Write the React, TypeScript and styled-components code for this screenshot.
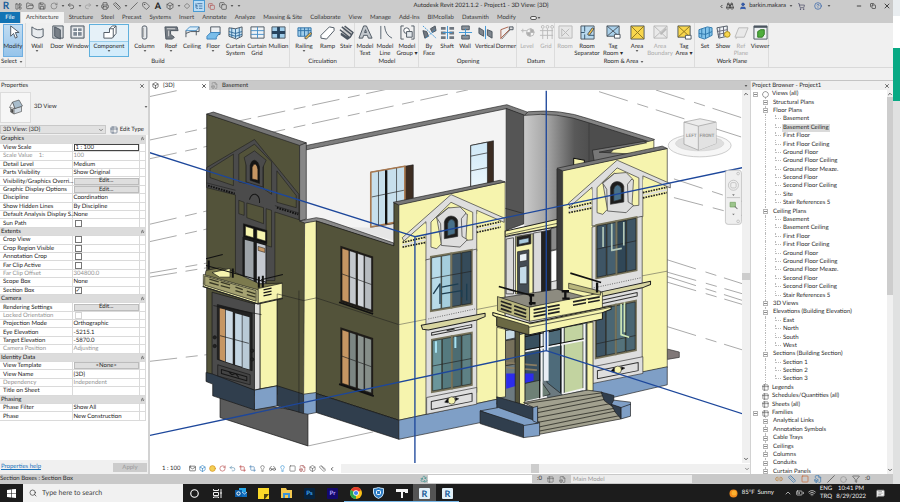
import React from "react";
import styled, { createGlobalStyle, css } from "styled-components";
import {
  X, ChevronDown, ChevronUp, ChevronLeft, ChevronsUp, Save, FolderOpen, Undo2, Redo2, Printer, Ruler, Slash,
  Tag, Box, Diamond, ListTree, LayoutPanelLeft, Copy, Search, ShoppingCart, CircleHelp, User, Binoculars,
  Minus, RotateCw, Filter, MessageSquareText, BatteryMedium, Wifi, Mail, Circle, Lightbulb, Glasses,
  Crop, Square, Link2, Recycle, FileBox, Table2,
} from "lucide-react";

const Global = createGlobalStyle`
  *, *::before, *::after { box-sizing: border-box; }
  body { margin: 0; background: #e4e5e5; text-rendering: geometricPrecision; }
  body, button, input, select { font-family: Lato, "Liberation Sans", sans-serif; font-size: 6px; color: #2b2b2b; text-rendering: geometricPrecision; }
  button, select { border: 0; padding: 0; margin: 0; background: none; }
  a { color: #1b74bd; }
  svg { display: block; flex: none; }
`;

/* ---------- frame ---------- */
const Screen = styled.div`height: 100vh; display: flex; flex-direction: column; line-height: 8px; overflow: hidden;`;
const Desk = styled.div`flex: 1; min-height: 0; display: flex;`;
const Revit = styled.div`flex: 1; min-width: 0; display: flex; flex-direction: column; background: #f0f0f0;`;
const Edge = styled.div`
  width: 7px; display: grid; grid-template-rows: 16px 32px 53px 1fr;
  & > :nth-child(1) { background: #e9edf0; }
  & > :nth-child(2) { background: #fff; }
  & > :nth-child(3) { background: #08a984; }
  & > :nth-child(4) { background: #e0e1e1; }
`;

/* ---------- title bar ---------- */
const TitleBar = styled.header`height: 12px; display: grid; grid-template-columns: auto 1fr auto; align-items: center; background: #cbcbcb;`;
const ToolStrip = styled.div`display: flex; align-items: center; height: 12px;`;
const Tool = styled.button<{ $on?: boolean }>`
  width: 12px; height: 12px; display: flex; align-items: center; justify-content: center; color: #444; flex: none;
  ${(p) => p.$on && css`background: #b9dcf5; box-shadow: inset 0 0 0 1px #4a9bd4; color: #174f86;`}
`;
const Logo = styled.b`color: #1c5f9c; font-size: 10px; line-height: 12px;`;
const Letter = styled.b`color: #222; font-size: 9px; line-height: 12px;`;
const Caret = styled.span<{ $w?: number }>`
  width: ${(p) => p.$w ?? 5}px; display: inline-flex; justify-content: center; flex: none;
  &::before { content: ""; border: 2px solid transparent; border-top-color: #333; border-bottom: 0; transform: scale(0.7); }
`;
const Title = styled.h1`margin: 0; font-size: 6px; font-weight: 400; line-height: 10px; text-align: center; white-space: nowrap;`;
const Account = styled(ToolStrip)`justify-content: flex-end; gap: 2px; white-space: nowrap; padding-right: 0;`;
const Gap = styled.span<{ $w: number }>`width: ${(p) => p.$w}px; flex: none;`;

/* ---------- ribbon ---------- */
const Tabs = styled.nav`height: 11px; display: flex; align-items: stretch; background: #cbcbcb;`;
const Tab = styled.button<{ $kind?: "file" | "active" }>`
  padding: 0 4px; line-height: 11px; white-space: nowrap; color: #3a3a3a;
  ${(p) => p.$kind === "file" && css`background: #1273b4; color: #fff; width: 20px; margin-right: 1px;`}
  ${(p) => p.$kind === "active" && css`background: #f2f2f2; padding: 0 5px; margin-right: 1px;`}
`;
const TabWidget = styled.span`display: flex; align-items: center; margin-left: 10px; &::before { content: ""; width: 7px; height: 4px; border: 1px solid #555; border-radius: 2px; background: #eee; }`;
const RibbonBar = styled.div`height: 45px; display: flex; background: #f0f0f0; border-bottom: 1px solid #d9d9d9;`;
const Group = styled.section<{ $pad?: boolean }>`
  display: flex; flex-direction: column; box-shadow: inset -1px 0 #dcdcdc;
  ${(p) => p.$pad && css`padding: 0 3px;`}
`;
const GroupRow = styled.div`display: flex; flex: 1; padding-top: 1px;`;
const GroupName = styled.div`display: flex; align-items: center; justify-content: center; line-height: 10px; height: 10px; white-space: nowrap; margin: 0 -3px;`;
const RibbonButton = styled.button<{ $w: number; $state?: "on" | "hot" | "off" }>`
  width: ${(p) => p.$w}px; height: 33px; display: flex; flex-direction: column; align-items: center; padding-top: 1px; line-height: 7px; white-space: nowrap;
  & > span.label { padding-top: 3px; }
  ${(p) => p.$state === "on" && css`background: linear-gradient(#c3ddf2, #94c3ea); box-shadow: inset 0 0 0 1px #6faee0;`}
  ${(p) => p.$state === "hot" && css`background: linear-gradient(#e6f1f8 17px, #5fb0dd 17px, #d3ecfb 18px); box-shadow: inset 0 0 0 1px #5fb0dd;`}
  ${(p) => p.$state === "off" && css`color: #aaa; svg { opacity: 0.35; filter: grayscale(1); }`}
`;
const OptionsBar = styled.div`height: 12px; background: #f1f1f1;`;

const ink = "#4c5560";
const I: Record<string, React.ReactNode> = {
  modify: <path d="M5 1v11l3-3 2 5 2-1-2-5h4z" fill="#fff" />,
  wall: <path d="M2 2q6 5 12 2v8q-5 4-12-1z" fill="#e8ebee" />,
  door: <><path d="M3 1h11v13H3z" fill="#d4d8dc" /><path d="M5 2l6 3v10l-6-3z" fill="#777e86" /></>,
  window: <><path d="M1 1h14v13H1z" fill="#c7ccd2" /><path d="M3 3h10v9H3zM8 3v9M3 7h10" fill="#7d8894" stroke="#fff" /></>,
  component: <path d="M2 8h6V4l3-3h4v8l-4 5H2zM8 4h4v9M12 4l3-3" fill="#fff" />,
  column: <><rect x="5.500" y="1" width="5" height="14" rx="2" fill="#e6e9ec" /><path d="M7 3v10" stroke="#aaa" /></>,
  roof: <><path d="M1 2l13 0 1 4H7v4l4 3-2 2H2z" fill="#747b83" /><path d="M3 4h9M5 6v6" stroke="#ddd" /></>,
  ceiling: <><path d="M1 6l4-4h10l-3 4z" fill="#dbeefa" stroke="#4a90c8" /><path d="M1 6v7M12 6v5M15 2v5M1 9l5-2h9" /></>,
  floor: <><path d="M5 2h10v8H5z" fill="#eceff2" /><path d="M1 12l4-4h10l-4 5v2H1z" fill="#79bdea" stroke="#3b83bd" /></>,
  csystem: <><path d="M1 3l7 1 7-2v10l-6 3-8-3z" fill="#c8e4f5" /><path d="M4 3v10M8 4v10M12 3v10M1 7l7 2 7-2M1 10l7 2 7-2" stroke="#356d9c" /></>,
  cgrid: <><path d="M1 2h14v12H1z" fill="#eef3f6" /><path d="M8 2v12M1 6h14M1 10h14" stroke="#4a90c8" /></>,
  mullion: <><path d="M1 2h14v12H1z" fill="#9fcdea" /><path d="M8 2v12M1 8h14" stroke="#26425c" strokeWidth="3" /></>,
  railing: <><path d="M1 3h14v9H1z" fill="#9fcdea" stroke="#2f72a8" /><path d="M4 3v9M8 3v9M12 3v9M1 6h14" stroke="#2f72a8" /><path d="M8 14l6-6 2 1-6 6z" fill="#f1c14d" /></>,
  ramp: <path d="M1 11l9-9 5 1v3l-8 9-6-1z" fill="#fff" />,
  stair: <path d="M3 2l10 8M1 5l10 8M6 1l9 7-3 5-3 2-7-5M2 9l8 5" strokeWidth="1.500" fill="#ccc" />,
  mtext: <path d="M1 14L6 1h3l6 13h-4l-1-3H6l-1 3zM7 8l1-3 1 3z" fill="#c3c8cd" />,
  mline: <path d="M3 1v14M7 1q1 10 8 13" stroke="#56636f" />,
  mgroup: <><path d="M4 1H1v14h3M12 1h3v14h-3" /><circle cx="7" cy="6" r="3" fill="#fff" /><path d="M7 7h6v6H7z" fill="#e3e8ec" /></>,
  byface: <><path d="M1 6l4 1 2 5-4 2zM9 4l5-3 1 5-4 2z" fill="#6f7780" /><path d="M1 1l14 13M4 14L14 5" stroke="#3d94d4" strokeDasharray="2 1" /></>,
  shaft: <><path d="M1 2h5v3H1zM1 7h5v3H1zM1 12h5v3H1zM10 2h5v3h-5zM10 7h5v3h-5zM10 12h5v3h-5z" fill="#6f7780" stroke="none" /><path d="M8 1v14M3 8h10" stroke="#3d94d4" /></>,
  owall: <><path d="M4 1h8v4H4zM4 11h8v4H4z" fill="#8b929a" /><path d="M1 8h14M8 4v8" stroke="#3d94d4" /></>,
  vertical: <><path d="M1 3l5 3v6L1 9zM10 5l5 2v7l-5-3z" fill="#7f878f" /><path d="M8 1v14" stroke="#3d94d4" /></>,
  dormer: <><path d="M2 14L14 2M2 5v10M2 5l8-3" stroke="#a9604a" /><path d="M11 2h4v3h-4z" fill="#ddd" /><path d="M12 5L3 15" stroke="#777" /></>,
  level: <><path d="M1 6h7M3 4v4" /><circle cx="11" cy="8" r="4" fill="#fff" /><path d="M11 4a4 4 0 0 1 4 4h-8a4 4 0 0 0 4 4z" fill="#333" /></>,
  grid: <><path d="M4 4v11M9 4v11M14 4v11M1 6h14M1 11h14" /><circle cx="4" cy="2" r="1.500" /><circle cx="9" cy="2" r="1.500" /><circle cx="14" cy="2" r="1.500" /></>,
  room: <path d="M1 1h14v13H1zM4 4l8 8M12 4l-8 8M4 4v8" fill="#d6dadd" />,
  roomsep: <><path d="M1 1h14v14H1z" fill="#b8d9ee" /><path d="M5 1v6M5 10v5M1 8h4M9 11h6" stroke="#33546e" /><path d="M8 10l5-7 2 1-5 7z" fill="#f1c14d" /></>,
  tagroom: <><path d="M1 1h13v11H1z" fill="#a9d0ea" /><path d="M1 1l13 11M14 1L1 12" /><path d="M9 10h6v4H9z" fill="#fff" /></>,
  area: <><path d="M1 1h14v14H1z" fill="#f8d64c" /><path d="M1 1l14 14M15 1L1 15" stroke="#8d7420" /></>,
  areab: <><path d="M1 1h14v13H1zM1 1l14 13M15 1L1 14" fill="#ddd" /><path d="M8 10l6-6" strokeWidth="2" /></>,
  tagarea: <><path d="M1 1h13v12H1z" fill="#f8d64c" /><path d="M1 1l13 12M14 1L1 13" stroke="#8d7420" /><path d="M9 11h6v4H9z" fill="#fff" /></>,
  set: <><path d="M1 5l9-3 5 1v8l-8 4-6-2z" fill="#82c3ea" stroke="#2f77ad" /><path d="M4 4v9M8 3v11M12 3v9M1 9l7 1 7-3" stroke="#2f77ad" /></>,
  show: <><path d="M1 3l11-2v11l-9 2z" fill="#eef3f6" /><path d="M4 3v10M8 2v10M1 7l11-2M2 10l10-2" stroke="#667" /><circle cx="12" cy="10" r="3" fill="#f8d64c" stroke="#a98c20" /></>,
  ref: <path d="M5 3h10l-4 10H1zM3 13l-1 2" fill="#ddd" />,
  viewer: <><path d="M1 1h14v14H1z" fill="#eef1f3" /><path d="M1 2h14" strokeWidth="2" /><path d="M5 7l3-2h4v5l-2 3H5z" fill="#4fae3d" stroke="#2f7a22" /></>,
};
const RIcon = ({ n }: { n: string }) => (
  <svg width="15" height="15" viewBox="0 0 16 16" fill="none" stroke={ink} strokeWidth="1" strokeLinejoin="round">{I[n]}</svg>
);
type RB = [string, string, number, ("on" | "hot" | "off" | "")?, boolean?];
const groups: { name: string; caret?: boolean; items: RB[] }[] = [
  { name: "Select", caret: true, items: [["modify", "Modify", 20, "on"]] },
  { name: "Build", items: [["wall", "Wall", 22, "", true], ["door", "Door", 18], ["window", "Window", 23], ["component", "Component", 40, "hot", true], ["column", "Column", 31, "", true], ["roof", "Roof", 22, "", true], ["ceiling", "Ceiling", 20], ["floor", "Floor", 22, "", true], ["csystem", "Curtain\nSystem", 23], ["cgrid", "Curtain\nGrid", 20], ["mullion", "Mullion", 23]] },
  { name: "Circulation", items: [["railing", "Railing", 28, "", true], ["ramp", "Ramp", 19], ["stair", "Stair", 18]] },
  { name: "Model", items: [["mtext", "Model\nText", 20], ["mline", "Model\nLine", 20], ["mgroup", "Model\nGroup ▾", 24]] },
  { name: "Opening", items: [["byface", "By\nFace", 20], ["shaft", "Shaft", 16], ["owall", "Wall", 20], ["vertical", "Vertical", 20], ["dormer", "Dormer", 22]] },
  { name: "Datum", items: [["level", "Level", 20, "off"], ["grid", "Grid", 18, "off"]] },
  { name: "Room & Area", caret: true, items: [["room", "Room", 20, "off"], ["roomsep", "Room\nSeparator", 24], ["tagroom", "Tag\nRoom ▾", 28], ["area", "Area", 20, "", true], ["areab", "Area\nBoundary", 26, "off"], ["tagarea", "Tag\nArea ▾", 22]] },
  { name: "Work Plane", items: [["set", "Set", 20], ["show", "Show", 16], ["ref", "Ref\nPlane", 20, "off"], ["viewer", "Viewer", 18]] },
];
const Ribbon = () => (
  <RibbonBar>
    {groups.map((g, i) => (
      <Group key={g.name} $pad={i === 0}>
        <GroupRow>
          {g.items.map(([icon, label, w, state, caret]) => (
            <RibbonButton key={icon} $w={w} $state={state || undefined}>
              <RIcon n={icon} />
              <span className="label">{label.split("\n").map((l) => <div key={l}>{l}</div>)}</span>
              {caret && <Caret />}
            </RibbonButton>
          ))}
        </GroupRow>
        <GroupName>{g.name}{g.caret && <Caret $w={8} />}</GroupName>
      </Group>
    ))}
  </RibbonBar>
);

/* ---------- properties ---------- */
const Work = styled.main`flex: 1; min-height: 0; display: grid; grid-template-columns: 148px 1fr 142px; gap: 1px; background: #d2d2d2; border-top: 1px solid #c4c4c4;`;
const Panel = styled.aside`display: flex; flex-direction: column; min-height: 0; overflow: hidden; background: #fff;`;
const PanelHead = styled.div`height: 9px; flex: none; display: flex; align-items: center; justify-content: space-between; background: #f0f0f0; padding: 0 0 0 1px; h2 { margin: 0; font-size: 6px; font-weight: 400; }`;
const TypeBox = styled.div`height: 34px; flex: none; display: flex; align-items: center; gap: 3px; background: #f0f0f0; padding: 1px 0; & > span:last-child { margin-left: auto; }`;
const Thumb = styled.span`width: 31px; height: 31px; border: 1px solid #dcdcdc; background: #f6f6f6; display: grid; place-items: center;`;
const TypeRow = styled.div`height: 11px; flex: none; display: flex; align-items: center; gap: 4px; background: #f0f0f0;`;
const Select = styled.select`appearance: none; width: 100%; height: 9px; line-height: 8px; color: #333; background: #e1e1e1; border: 1px solid #c8c8c8; padding: 0 2px;`;
const SelectWrap = styled.label`flex: 1; display: flex; align-items: center; position: relative; svg { position: absolute; right: 2px; }`;
const EditType = styled.button`display: flex; align-items: center; gap: 2px; padding-right: 4px; white-space: nowrap;`;
const Sheet = styled.div`flex: 1; min-height: 0;`;
const Props = styled.table`
  width: calc(100% - 2px); height: 88%; border-collapse: collapse; table-layout: fixed; line-height: 7px;
  td, th { padding: 0; font-weight: 400; text-align: left; white-space: nowrap; border-bottom: 1px solid #dadada; border-right: 1px solid #dadada; height: 8px; }
  tbody th { padding-left: 3px; }
  td { padding-left: 1px; }
  td:last-child { padding: 0; }
`;
const Section = styled.tr`background: #dcdcdc; th[colspan] { padding-left: 1px; border-right: 0; color: #222; } svg { margin: auto; }`;
const Dim = styled.tr<{ $dim?: boolean }>`color: ${(p) => (p.$dim ? "#929292" : "#222")};`;
const EditBtn = styled.button`display: block; width: 100%; height: 7px; line-height: 6px; background: #dedede; box-shadow: inset 0 0 0 1px #bcbcbc;`;
const Field = styled.input`display: block; width: 100%; height: 7px; border: 1px solid #444; padding: 0 1px; line-height: 5px;`;
const Check = styled.input`
  appearance: none; display: block; margin: 0 1px; width: 7px; height: 7px; border: 1px solid #777; background: #fff;
  &:checked::after { content: "✓"; display: block; font-size: 6px; line-height: 5px; }
  &:disabled { border-color: #d5d5d5; }
`;
const PropsFoot = styled.div`height: 14px; flex: none; display: flex; align-items: center; justify-content: space-between; background: #f0f0f0; padding: 0 1px;`;
const Apply = styled.button`width: 34px; height: 9px; background: #ccc; color: #999; line-height: 9px;`;

const rows: string[][] = [
  ["#", "Graphics"], ["View Scale", "1 : 100", "field"], ["Scale Value\u00a0\u00a0\u00a0 1:", "100", "dim"], ["Detail Level", "Medium"], ["Parts Visibility", "Show Original"],
  ["Visibility/Graphics Overri...", "Edit...", "btn"], ["Graphic Display Options", "Edit...", "btn"], ["Discipline", "Coordination"], ["Show Hidden Lines", "By Discipline"],
  ["Default Analysis Display S...", "None"], ["Sun Path", "", "check"],
  ["#", "Extents"], ["Crop View", "", "check"], ["Crop Region Visible", "", "check"], ["Annotation Crop", "", "check"], ["Far Clip Active", "", "check"],
  ["Far Clip Offset", "304800.0", "dim"], ["Scope Box", "None"], ["Section Box", "on", "check"],
  ["#", "Camera"], ["Rendering Settings", "Edit...", "btn"], ["Locked Orientation", "", "check-dim"], ["Projection Mode", "Orthographic"], ["Eye Elevation", "-5215.1"],
  ["Target Elevation", "-5870.0"], ["Camera Position", "Adjusting", "dim"],
  ["#", "Identity Data"], ["View Template", "<None>", "btn"], ["View Name", "{3D}"], ["Dependency", "Independent", "dim"], ["Title on Sheet", ""],
  ["#", "Phasing"], ["Phase Filter", "Show All"], ["Phase", "New Construction"],
];
const cell = (label: string, value: string, kind?: string) => {
  if (kind === "btn") return <EditBtn aria-label={label}>{value}</EditBtn>;
  if (kind === "field") return <Field aria-label={label} defaultValue={value} />;
  if (kind?.startsWith("check")) return <Check type="checkbox" aria-label={label} defaultChecked={value === "on"} disabled={kind === "check-dim"} />;
  return value;
};
const House = () => (
  <svg width="16" height="16" viewBox="0 0 16 16" stroke="#444" strokeWidth="0.600" strokeLinejoin="round">
    <path d="M2.500 8v5l3.500 2V9z" fill="#fff" /><path d="M6 9.500l7.500-2v5L6 15z" fill="#cfd9e2" /><path d="M1.500 8.500L4.500 3l2.500 6.500z" fill="#f4f6f8" /><path d="M4.500 3l6.500-2 3.500 6-7.500 2.500z" fill="#a9bdcc" /><path d="M3.500 10l1.300.6v3.200l-1.300-.7z" fill="#222" />
  </svg>
);
const Properties = () => (
  <Panel>
    <PanelHead><h2>Properties</h2><Tool aria-label="Close properties"><X size={6} strokeWidth={3} /></Tool></PanelHead>
    <TypeBox><Thumb><House /></Thumb><span>3D View</span><Caret /></TypeBox>
    <TypeRow>
      <SelectWrap><Select aria-label="View selector"><option>{"3D View: {3D}"}</option></Select><ChevronDown size={6} /></SelectWrap>
      <EditType><Table2 size={8} color="#5a6a80" />Edit Type</EditType>
    </TypeRow>
    <Sheet>
      <Props>
        <colgroup><col width="72" /><col /><col width="6" /></colgroup>
        <tbody>
          {rows.map(([a, b, k]) => a === "#" ? (
            <Section key={b}><th colSpan={2}>{b}</th><td><ChevronsUp size={5} strokeWidth={3} /></td></Section>
          ) : (
            <Dim key={a} $dim={!!k?.includes("dim")}><th>{a}</th><td>{cell(a, b, k)}</td><td /></Dim>
          ))}
        </tbody>
      </Props>
    </Sheet>
    <PropsFoot><a href="#help">Properties help</a><Apply disabled>Apply</Apply></PropsFoot>
  </Panel>
);

/* ---------- project browser ---------- */
const Browser = styled.div`flex: 1; min-height: 0; display: flex; overflow: hidden;`;
const Tree = styled.ul`flex: 1; margin: 0 0 -2px; padding: 0; list-style: none; display: flex; flex-direction: column;`;
const Node = styled.li<{ $d: number; $sel?: boolean }>`
  flex: 1; min-height: 0; display: flex; align-items: center; gap: 2px; white-space: nowrap; line-height: 8px;
  padding-left: ${(p) => [2, 12, 23][p.$d]}px; position: relative;
  ${(p) => p.$d > 0 && css`&::before { content: ""; position: absolute; left: 14px; top: 0; bottom: 0; border-left: 1px dotted #bbb; }`}
  ${(p) => p.$d > 1 && css`&::after { content: ""; position: absolute; left: 24px; top: 0; width: 6px; height: 50%; border: dotted #bbb; border-width: 0 0 1px 1px; }`}
  & > span { ${(p) => p.$d > 1 && css`margin-left: 8px;`} ${(p) => p.$sel && css`background: #dadada;`} padding: 0 1px; }
`;
const Toggle = styled.button`
  width: 5px; height: 5px; background: #fff; border: 1px solid #b5b5b5; position: relative; z-index: 1; margin-right: 2px; flex: none; display: grid; place-items: center;
  &::before { content: ""; width: 3px; height: 1px; background: #888; }
`;
const VScroll = styled.div<{ $w: number }>`width: ${(p) => p.$w}px; flex: none; display: flex; flex-direction: column; align-items: center; background: #f0f0f0; padding: 1px 0;`;
const Knob = styled.span<{ $size: number }>`width: 100%; flex: ${(p) => p.$size} 0 0; background: #cdcdcd;`;
const Spring = styled.span<{ $n: number }>`flex: ${(p) => p.$n} 0 0;`;
const plans = ["Basement", "Basement Ceiling", "First Floor", "First Floor Ceiling", "Ground Floor", "Ground Floor Ceiling", "Ground Floor Meaze.", "Second Floor", "Second Floor Ceiling"];
const tree: [number, string, string?][] = [
  [0, "Views (all)", "views"], [1, "Structural Plans"], [1, "Floor Plans"],
  ...[...plans, "Site", "Stair References 5"].map((p) => [2, p] as [number, string]),
  [1, "Ceiling Plans"], ...[...plans, "Stair References 5"].map((p) => [2, p] as [number, string]),
  [1, "3D Views"], [1, "Elevations (Building Elevation)"], [2, "East"], [2, "North"], [2, "South"], [2, "West"],
  [1, "Sections (Building Section)"], [2, "Section 1"], [2, "Section 2"], [2, "Section 3"],
  [0, "Legends", "leaf"], [0, "Schedules/Quantities (all)", "leaf"], [0, "Sheets (all)", "leaf"], [0, "Families", "fam"],
  ...["Analytical Links", "Annotation Symbols", "Cable Trays", "Ceilings", "Columns", "Conduits", "Curtain Panels"].map((p) => [1, p] as [number, string]),
];
const LeafGap = styled.i`width: 7px; flex: none;`;
const ProjectBrowser = () => (
  <Panel>
    <PanelHead><h2>Project Browser - Project1</h2><Tool aria-label="Close browser"><X size={6} strokeWidth={3} /></Tool></PanelHead>
    <Browser>
      <Tree>
        {tree.map(([d, t, k], i) => (
          <Node key={i} $d={d} $sel={i === 4}>
            {k === "leaf" ? <LeafGap /> : d < 2 && <Toggle aria-label={t} />}
            {d === 0 && (k === "views" ? <Circle size={7} color="#555" strokeDasharray="6 2" /> : <Table2 size={7} color="#555" />)}
            <span>{t}</span>
          </Node>
        ))}
      </Tree>
      <VScroll $w={6}><ChevronUp size={6} strokeWidth={3} /><Knob $size={197} /><Spring $n={172} /><ChevronDown size={6} strokeWidth={3} /></VScroll>
    </Browser>
  </Panel>
);

/* ---------- 3D model drawing ---------- */
const quad = (x: number, y: number, w: number, h: number, s: number) =>
  `${x},${y} ${x + w},${y + w * s} ${x + w},${y + h + w * s} ${x},${y + h}`;
const OLIVE = "#53533a", YEL = "#f6f4ae", LIT = "#7f9fc6", SHADE = "#303e4d", STONE = "#dedede", DARK = "#4b4b4b";

type WinProps = { x: number; y: number; w: number; h: number; s: number; panes: string[]; frame?: string; bar?: number };
const Win = ({ x, y, w, h, s, panes, frame = "#1f1c18", bar = 0.5 }: WinProps) => {
  const pw = (w - 8) / panes.length;
  return (
    <g>
      <polygon points={quad(x, y, w, h, s)} fill={frame} />
      {panes.map((c, i) => {
        const px = x + 4 + i * pw;
        return <polygon key={i} points={quad(px + 1, y + 6 + (px - x) * s, pw - 2, h - 12, s)} fill={c} stroke="#111" strokeWidth="1.500" />;
      })}
      <line x1={x + w / 2} y1={y + (w / 2) * s} x2={x + w / 2} y2={y + h + (w / 2) * s} stroke={frame} strokeWidth="6" />
      <line x1={x + 4} y1={y + h * bar} x2={x + w - 4} y2={y + h * bar + w * s} stroke="#222" strokeWidth="2" />
    </g>
  );
};

const Gable = () => (
  <g stroke="#333" strokeWidth="2">
    <path d="M67 472L213 343L372 413V426L290 390V512L138 540V424L72 482Z" fill={STONE} />
    <path d="M92 470L138 430V462ZM290 400L352 424L290 436Z" fill={YEL} stroke="none" />
    <path d="M153 425L213 366L278 396V478L258 480V470L262 402L205 382L170 410L184 490L170 505L153 500Z" fill={YEL} />
    <path d="M170 412L205 383L240 380L258 398L244 415L246 468L262 478L240 500L184 495L182 430Z" fill={STONE} />
    <path d="M193 475V425Q197 408 213 407Q230 408 233 422V468Z" fill="#1d1d1d" />
    <path d="M203 466V430Q206 418 214 417Q223 418 225 428V460Z" fill="#47708a" />
    <path d="M68 486L138 470M68 500L138 486M290 440L362 424M290 456L362 440" stroke="#222" strokeWidth="5" strokeDasharray="5 3" />
    <path d="M68 494L138 478M290 448L362 432" stroke={STONE} strokeWidth="5" />
  </g>
);
const Panel3 = ({ x, y }: { x: number; y: number }) => (
  <g stroke="#333" strokeWidth="2">
    <polygon points={quad(x, y, 150, 50, -0.2)} fill={STONE} />
    <polygon points={quad(x + 14, y + 12, 122, 24, -0.2)} fill={STONE} strokeWidth="3" />
    <circle cx={x + 75} cy={y + 9} r="11" fill={YEL} strokeWidth="2" />
    <path d={`M${x + 54} ${y + 14}l10 -12v14zM${x + 96} ${y + 4}l-10 -4v10z`} />
  </g>
);

const Model = () => (
  <svg width="100%" height="100%" viewBox="450 270 1776 1116" preserveAspectRatio="xMidYMid slice" strokeLinejoin="round">
    <g stroke="#555" strokeWidth="1.500" fill="none">
      <path strokeDasharray="84 26 36 20" d="M450 290L560 266M450 420L1160 268M450 476L1420 266M450 672L622 632M450 724L622 686M450 818L622 788M450 830L622 802M450 1082L622 1062" />
      <path strokeDasharray="90 30 34 24" d="M1796 275L2226 412M1966 270L2226 354M2020 536L2226 604M2020 592L2226 646M2000 778L2226 850M2000 815L2226 880M2000 828L2226 900M2000 845L2226 912M2000 978L2226 1048" />
      <path d="M925 1335L1120 1293" />
    </g>
    {/* rear walls seen from inside */}
    <polygon points="920,442 1518,325 1518,700 1180,740 920,660" fill="#f3f3f3" />
    <polygon points="920,436 1520,314 1584,337 1572,347 1518,326 920,449" fill="#7d7d7d" stroke="#222" strokeWidth="2" />
    <polygon points="1518,325 1572,345 1572,670 1518,690" fill="#555" stroke="#222" strokeWidth="2" />
    <defs>
      <linearGradient id="curve"><stop offset="0" stopColor="#c9c9c9" /><stop offset="0.350" stopColor="#a5a5a5" /><stop offset="0.780" stopColor="#595959" /><stop offset="1" stopColor="#4f4f4f" /></linearGradient>
      <linearGradient id="sky" x2="0" y2="1"><stop offset="0" stopColor="#cfe8f7" /><stop offset="1" stopColor="#eaf6fc" /></linearGradient>
    </defs>
    <path d="M1572 345Q1680 325 1765 362V680H1572Z" fill="url(#curve)" />
    <polygon points="1765,362 1958,422 1958,480 1765,510" fill="#4d4d4d" stroke="#222" strokeWidth="2" />
    <path d="M1572 346L1584 335Q1680 326 1765 356L1962 418L1950 426L1765 368Q1670 334 1572 346Z" fill="#848484" stroke="#222" strokeWidth="2" />
    <polygon points="1840,448 1960,420 1960,470 1790,500" fill={YEL} stroke="#333" strokeWidth="2" />
    <polygon points="1776,450 1930,424 1938,428 1796,456 1900,462 1890,478 1784,500" fill="#777" stroke="#222" strokeWidth="2" />
    <polygon points="1720,474 1752,480 1752,500 1720,500" fill={YEL} stroke="#111" strokeWidth="3" />
    <path d="M1515 624L1572 640" stroke="#222" strokeWidth="2" />

    <g stroke="#222" strokeWidth="2">
      <polygon points="1412,436 1480,422 1480,545 1412,560" fill="#3b2c22" />
      <polygon points="1412,436 1462,426 1462,550 1412,560" fill="url(#sky)" />
      <path d="M1412 468L1462 458M1412 512L1462 502" />
      <polygon points="1113,516 1240,494 1240,665 1113,690" fill="#3d2d22" />
      <polygon points="1113,516 1215,498 1215,660 1113,680" fill="#c7dfec" stroke="#a97950" strokeWidth="5" />
      <path d="M1159 510V672" stroke="#111" strokeWidth="7" />
      <path d="M1136 514V676M1190 504V665M1116 590L1212 570" />
    </g>
    <polygon points="1113,682 1200,668 1180,720 1040,680" fill="#e6e6e6" />

    {/* base below the tower */}
    <polygon points="662,1190 925,1235 925,1335 662,1250" fill="#5b5b5b" stroke="#111" strokeWidth="2" />

    {/* left tower */}
    <polygon points="622,342 900,430 900,660 915,665 915,1200 833,1180 780,1190 640,1130 622,1115" fill={OLIVE} stroke="#111" strokeWidth="2" />
    <polygon points="900,432 920,428 920,656 900,662" fill="#868686" stroke="#222" strokeWidth="2" />
    <polygon points="622,342 642,336 920,428 900,436" fill="#757575" stroke="#222" strokeWidth="2" />
    <g transform="translate(450 240)" stroke="#161616" strokeWidth="1.500" fill={DARK}>
      <path d="M172 262L315 178L448 342V418L376 395V600H258V344L172 322Z" />
      <path d="M182 266L252 222V316L182 292Z" fill={OLIVE} />
      <path d="M382 272L440 346V382L382 366Z" fill={OLIVE} />
      <path d="M268 222L315 192L366 245V342L342 325V250L315 215L290 235V310L268 305Z" fill={OLIVE} />
      <path d="M284 232L315 212L350 240L340 262V320L290 305V255Z" />
      <path d="M302 300V255Q306 240 315 240Q326 242 330 260V310Z" fill="#151515" />
      <path d="M308 296V262Q312 250 318 252Q324 256 325 268V300Z" fill="#c69663" />
      <path d="M300 358Q305 340 318 342Q332 348 330 368" strokeWidth="3" />
      <path d="M176 316L256 340M382 382L446 402" strokeWidth="6" stroke="#111" strokeDasharray="5 3" />
      <path d="M172 308L258 330M376 376L448 398" />
      <path d="M292 368L342 382V430L292 412ZM350 385L366 390V500L350 495ZM268 360L284 366V405L268 400Z" fill={OLIVE} />
      <path d="M282 430L352 450V490L282 470Z" fill="#111" />
      <path d="M288 438L312 445V472L288 465ZM322 448L348 455V482L322 474Z" fill={YEL} />
      <path d="M280 470L350 490V620H280Z" fill="#1a1a1a" />
      <path d="M286 478L312 485V610H286Z" fill="#9ea4a9" stroke="none" />
      <path d="M322 488L348 495V610H322Z" fill="#c5c9d0" stroke="none" />
      <path d="M326 498L346 504V516L326 510Z" fill="#c69663" />
    </g>

    {/* tower bay */}
    <g transform="translate(600 780)" stroke="#161616" strokeWidth="2">
      <polygon points="38,95 165,130 165,388 38,345" fill={DARK} />
      <polygon points="165,130 182,126 182,384 165,388" fill={STONE} />
      <polygon points="182,126 233,115 233,375 182,384" fill={YEL} />
      <polygon points="54,132 158,158 158,330 54,296" fill="#222" />
      <g stroke="none">
        <polygon points="61,143 77,147 77,302 61,296" fill="#c69663" />
        <polygon points="79,148 100,154 100,310 79,303" fill="#cbd9e4" />
        <polygon points="107,158 127,163 127,318 107,312" fill="#c3d5e2" />
        <polygon points="129,164 150,170 150,326 129,320" fill="#b9cad6" />
      </g>
      <path d="M62 225L148 248M42 135L186 162" />
      <polygon points="55,312 152,342 152,372 55,346" fill="#444" />
      <path d="M66 326L142 348V360L66 338ZM88 334l10 8 10 -4 10 12" fill="none" strokeWidth="3" />
      <circle cx="46" cy="230" r="5" fill="#222" /><circle cx="46" cy="256" r="5" fill="#222" /><circle cx="158" cy="270" r="5" fill="#222" /><circle cx="158" cy="296" r="5" fill="#222" />
      <polygon points="20,335 40,340 165,388 165,447 40,405 40,370 20,362" fill={SHADE} />
      <polygon points="165,388 233,375 233,435 165,447" fill={LIT} />
      <polygon points="233,375 312,400 312,458 233,435" fill={SHADE} />
      {/* balcony */}
      <polygon points="20,30 60,22 95,30 180,70 248,68 180,98 12,70" fill="#7c7a4e" />
      <polygon points="38,36 92,24 92,50 60,50" fill={YEL} />
      <polygon points="12,42 176,88 176,130 12,78" fill={YEL} />
      <polygon points="16,46 170,90 170,122 16,74" fill="#a5a271" />
      <path d="M30 56l28 8M30 66l28 8M64 65l28 8M64 75l28 8M108 80l22 7M108 90l22 7M142 92l26 8M142 102l26 8" stroke="#3a3a26" strokeWidth="4" />
      <polygon points="176,84 248,68 248,112 176,128" fill={YEL} />
      <path d="M192 88l24 -5M192 97l24 -5M192 106l24 -5" strokeWidth="4" />
      <path d="M10 78L176 130L250 114" fill="none" stroke="#222" strokeWidth="3" />
      <path d="M20 15L200 65M20 -5L70 -18M185 58L250 42" stroke="#111" strokeWidth="3" fill="none" />
      <path d="M178 48v34M190 46v34M28 0v26M100 24v28" stroke="#111" strokeWidth="6" />
    </g>

    {/* side wall */}
    <polygon points="915,668 950,658 950,1178 912,1182" fill={YEL} stroke="#333" strokeWidth="2" />
    <polygon points="900,662 950,652 972,656 1182,728 1182,738 950,662 915,668" fill="#8a8a8a" stroke="#222" strokeWidth="2" />
    <polygon points="950,662 1182,736 1182,608 1197,612 1197,1258 950,1178" fill={OLIVE} stroke="#111" strokeWidth="2" />
    <path d="M833 880L912 900L950 892L1197 972M833 880V1160M898 870V1235" stroke="#1c1c1c" strokeWidth="1.500" fill="none" />
    <polygon points="912,1180 950,1175 950,1235 925,1240 912,1238" fill={LIT} stroke="#222" strokeWidth="2" />
    <polygon points="950,1178 1197,1258 1197,1315 950,1235" fill={SHADE} stroke="#111" strokeWidth="2" />
    <Win x={1022} y={736} w={98} h={168} s={0.33} panes={["#c69663", "#c4c8cd", "#d2d5da", "#b7bbc0"]} />
    <Win x={1022} y={980} w={98} h={172} s={0.33} panes={["#c69663", "#7c8683", "#8b938f", "#868e89"]} />
    <path d="M1018 905L1120 940M1018 1150L1122 1186" stroke="#111" strokeWidth="5" />

    {/* left front */}
    <polygon points="1197,612 1515,545 1515,1190 1197,1258" fill={YEL} stroke="#333" strokeWidth="2" />
    <polygon points="1180,606 1500,540 1515,545 1197,614" fill="#777" stroke="#222" strokeWidth="2" />
    <polygon points="1197,1258 1515,1190 1515,1250 1197,1315" fill={LIT} stroke="#222" strokeWidth="2" />
    <path d="M1197 972L1490 915" stroke="#444" strokeWidth="1.500" />
    <g transform="translate(1140 240)"><Gable /></g>
    <polygon points="1278,778 1430,746 1430,1175 1278,1240" fill={STONE} stroke="#333" strokeWidth="2" />
    <Win x={1290} y={767} w={128} h={168} s={-0.17} frame="#77735a" panes={["#b8dbe9", "#a5cddd", "#3e5565", "#354b5a"]} bar={0.4} />
    <path d="M1300 880l20 -30v60M1325 860l50 -10M1325 880l60 -10v20M1400 850v50" stroke="#1d3d50" strokeWidth="4" fill="none" />
    <path d="M1285 955L1425 925" stroke="#333" strokeWidth="2" strokeDasharray="3 4" />
    <polygon points="1264,974 1455,938 1455,948 1430,958 1285,988 1268,986" fill="#d8d5a0" stroke="#222" strokeWidth="3" />
    <path d="M1295 996L1415 972V980L1295 1004ZM1340 990l24 -5" fill="none" stroke="#333" strokeWidth="3" />
    <Win x={1293} y={1015} w={125} h={162} s={-0.18} frame="#77735a" panes={["#6b969b", "#557a7f", "#4c6c72", "#5e8184"]} />
    <path d="M1308 1022v34M1366 1008v34" stroke="#a8e2f2" strokeWidth="6" />
    <Panel3 x={1280} y={1190} />

    {/* recessed centre */}
    <g transform="translate(1140 240)" stroke="#222" strokeWidth="2">
      <polygon points="375,470 548,435 548,720 375,760" fill={STONE} />
      <polygon points="375,452 545,414 545,436 375,468" fill={YEL} strokeWidth="3" />
      <path d="M378 462L545 426" />
      <polygon points="378,476 400,472 400,640 378,640" fill="#d9d9d9" />
      <polygon points="406,468 458,460 458,640 406,640" fill={YEL} />
      <polygon points="410,470 452,462 452,490 410,498" fill="#222" />
      <polygon points="416,478 446,472 446,486 416,492" fill="#a8c9dc" />
      <polygon points="412,514 446,508 446,640 412,640" fill="#444c54" />
      <polygon points="418,522 440,518 440,540 418,544" fill="#e9f1f6" />
      <polygon points="418,560 440,556 440,610 418,610" fill="#c5dbe8" />
      <polygon points="460,458 484,454 484,640 460,640" fill="#d9d9d9" />
      <polygon points="484,454 512,448 512,640 484,640" fill="#222" />
      <polygon points="512,512 530,508 530,600 512,604" fill="#fff" />
      <polygon points="512,445 530,440 530,506 512,510" fill="#8a8a8a" />
      <polygon points="530,266 548,270 548,700 530,700" fill="#3b3b3b" />
    </g>

    {/* right front */}
    <polygon points="2000,1045 2036,1054 2036,1070 2000,1076" fill="#807878" stroke="#333" strokeWidth="2" />
    <polygon points="1687,510 2000,445 2000,1100 1687,1162" fill={YEL} stroke="#333" strokeWidth="2" />
    <polygon points="1670,504 1985,438 2000,445 1687,512" fill="#777" stroke="#222" strokeWidth="2" />
    <polygon points="1687,1162 2000,1098 2000,1152 1687,1225" fill={LIT} stroke="#222" strokeWidth="2" />
    <path d="M1925 826L2000 812" stroke="#444" strokeWidth="1.500" />
    <g transform="translate(1637 137)"><Gable /></g>
    <polygon points="1775,680 1925,648 1925,1085 1775,1140" fill={STONE} stroke="#333" strokeWidth="2" />
    <Win x={1785} y={672} w={126} h={165} s={-0.2} frame="#77735a" panes={["#3e5565", "#46606f", "#304757", "#3e5565"]} bar={0.45} />
    <path d="M1808 680v60M1834 670v80l30 -6M1870 665v70" stroke="#b2c7b8" strokeWidth="5" fill="none" />
    <path d="M1780 862L1920 832" stroke="#333" strokeWidth="2" strokeDasharray="3 4" />
    <polygon points="1775,880 1950,842 1950,852 1925,862 1775,894" fill="#d8d5a0" stroke="#222" strokeWidth="3" />
    <path d="M1800 900L1910 876V886L1800 910Z" fill="none" stroke="#333" strokeWidth="3" />
    <Win x={1783} y={922} w={126} h={154} s={-0.2} frame="#77735a" panes={["#3e5565", "#4a6673", "#54727b", "#4a6673"]} bar={0.7} />
    <path d="M1862 910v92l24 8M1872 905v90" stroke="#cfe8b8" strokeWidth="5" fill="none" />
    <Panel3 x={1777} y={1098} />

    {/* entrance porch, balcony and steps */}
    <g transform="translate(1200 780)" stroke="#1c1c1c" strokeWidth="2">
      <polygon points="315,195 560,170 560,400 480,420 290,430" fill="#6c7a80" />
      <polygon points="316,240 345,235 345,310 316,315" fill="#77715c" />
      <polygon points="316,210 345,205 345,232 316,238" fill="#c7dbe6" />
      <polygon points="374,222 420,212 420,415 374,425" fill="#39505f" />
      <polygon points="318,338 400,338 400,360 318,384" fill="#2c2cec" stroke="none" />
      <path d="M318 306L410 314M318 320L410 328" stroke="#8a7d62" strokeWidth="5" />
      <polygon points="374,368 420,358 450,400 374,425" fill="#6e8076" />
      <polygon points="492,200 548,190 548,385 492,400" fill="#c2d3a0" />
      <polygon points="440,215 484,205 484,400 440,365" fill="#4e6b7a" />
      <path d="M374 272L550 238M424 210V414M487 200V400M552 190V390M374 424L440 408M487 400L552 384" stroke="#f4f4f4" strokeWidth="6" fill="none" />
      <path d="M374 268L550 234M418 212V412M481 202V396M374 228L480 206" fill="none" stroke="#111" strokeWidth="3" />
      <path d="M438 210V360" stroke="#e9eef5" strokeWidth="14" />
      <polygon points="290,200 316,206 316,408 290,412" fill={YEL} />
      <polygon points="345,205 358,208 358,430 345,425" fill={OLIVE} />
      <polygon points="358,222 374,218 374,430 358,432" fill={YEL} />
      <polygon points="560,188 578,184 578,390 560,394" fill={YEL} />
      {/* balcony */}
      <polygon points="300,112 385,140 560,110 470,86" fill="#8d8b80" />
      <polygon points="292,108 388,140 388,182 292,150" fill="#b9b67d" />
      <path d="M302 122l32 11M302 133l32 11M302 144l32 11M342 136l36 12M342 147l36 12M342 158l36 12" stroke="#222" strokeWidth="5" />
      <polygon points="388,140 606,96 606,142 388,182" fill={YEL} />
      <path d="M400 148l78 -15M400 158l78 -15M400 168l78 -15M518 124l80 -15M518 134l80 -15" stroke="#222" strokeWidth="5" />
      <path d="M440 140v26M560 116v26" stroke={YEL} strokeWidth="6" />
      <path d="M505 68L600 92V104L505 84Z" fill="#b9b67d" />
      <polygon points="278,156 388,188 632,136 632,146 606,156 606,175 388,222 290,196 290,170 278,164" fill={YEL} strokeWidth="3" />
      <polygon points="290,168 386,196 386,222 290,196" fill="#6b6944" />
      <path d="M386 200L606 156M388 190L632 140" />
      <path d="M296 78L392 104M510 38L602 66" stroke="#111" strokeWidth="5" />
      <path d="M386 104l16 0M392 108v26M386 128h20M484 92h22M495 92v24M486 114h22M590 66v30" stroke="#111" strokeWidth="7" />
      {/* steps */}
      <polygon points="370,425 560,388 605,394 662,460 662,474 418,520 400,440" fill="#a2a18f" />
      <path d="M376 428L605 396M396 446L610 404M410 456L622 414M412 470L632 428M414 484L642 442M416 498L650 450M418 510L660 464" strokeWidth="3" stroke="#43433a" />
      <polygon points="290,408 400,440 412,444 412,486 390,486 290,450" fill={SHADE} />
      <polygon points="240,450 295,440 418,484 370,500" fill={LIT} />
      <polygon points="240,450 370,492 370,530 240,488" fill={SHADE} />
      <polygon points="370,494 418,486 418,524 370,530" fill={LIT} />
      <polygon points="398,440 412,436 412,486 398,480" fill={LIT} />
      <polygon points="602,394 640,404 640,440 612,420" fill={SHADE} />
      <polygon points="640,418 690,424 690,432 662,442 632,432" fill={LIT} />
      <polygon points="632,430 662,440 662,474 645,455" fill={SHADE} />
      <polygon points="662,440 690,430 690,466 662,474" fill={LIT} />
    </g>

    {/* section box */}
    <g stroke="#1d479b" strokeWidth="4" fill="none">
      <path d="M450 457L1245 709L2226 502M1245 709V1386M450 1304L1638 1050L2226 1239M1638 272V1050" />
    </g>

    {/* view cube */}
    <g transform="translate(1140 240)" stroke="#b5b5b5" strokeWidth="2">
      <ellipse cx="957" cy="196" rx="94" ry="34" fill="#f6f6f6" />
      <ellipse cx="957" cy="190" rx="72" ry="22" fill="#dedede" stroke="#d2d2d2" />
      <polygon points="910,126 958,116 1006,126 1006,190 953,210 910,192" fill="#ececec" stroke="#9a9a9a" />
      <polygon points="953,138 1006,126 1006,190 953,210" fill="#e2e2e2" stroke="none" />
      <path d="M910 126L953 138L1006 126M953 138V210" fill="none" stroke="#9a9a9a" />
      <g fontFamily="Roboto, sans-serif" fontWeight="700" fill="#9b9b9b" stroke="none" textAnchor="middle">
        <text x="932" y="170" fontSize="14">LEFT</text><text x="979" y="170" fontSize="14">FRONT</text>
      </g>
    </g>
    {/* navigation bar */}
    <g transform="translate(1140 240)" stroke="#b3b3b3" strokeWidth="2" fill="none">
      <rect x="1034" y="270" width="48" height="162" rx="8" fill="#efefef" />
      <circle cx="1058" cy="315" r="15" /><rect x="1050" y="307" width="16" height="16" rx="4" />
      <circle cx="1072" cy="280" r="4" /><circle cx="1072" cy="423" r="4" />
      <path d="M1038 352h40" /><path d="M1054 342h8l-4 5zM1054 400h8l-4 5z" fill="#777" stroke="none" />
      <path d="M1048 366h16v14h-16z" fill="#9cc48c" stroke="#6fa05c" /><path d="M1062 378l8 8" stroke="#777" strokeWidth="3" />
    </g>
  </svg>
);

/* ---------- view ---------- */
const View = styled.section`display: flex; flex-direction: column; min-width: 0; min-height: 0; background: #fff; margin-left: 1px;`;
const ViewTabs = styled.div`height: 9px; flex: none; display: flex; align-items: center; background: #c9c9c9;`;
const ViewTab = styled.button<{ $on?: boolean }>`
  width: 59px; height: 9px; display: flex; align-items: center; gap: 4px; padding: 0 2px; line-height: 9px;
  background: ${(p) => (p.$on ? "#fff" : "transparent")}; & > svg:last-child:not(:first-child) { margin-left: auto; }
`;
const Stage = styled.div`flex: 1; min-height: 0; display: flex;`;
const Canvas = styled.div`flex: 1; min-width: 0; height: 100%; overflow: hidden;`;
const ViewBar = styled.div`height: 11px; flex: none; display: flex; align-items: center; gap: 3px; padding-left: 12px; & > span:first-child { margin-right: 5px; }`;
const HScroll = styled.div`flex: 1; height: 9px; display: flex; align-items: center; background: #f0f0f0; margin-left: 3px;`;
const HKnob = styled.span`width: 8px; height: 9px; background: #cdcdcd;`;

const ModelView = () => (
  <View>
    <ViewTabs>
      <ViewTab $on><Box size={7} /><span>{"{3D}"}</span><X size={6} strokeWidth={3} /></ViewTab>
      <ViewTab><FileBox size={7} color="#888" /><span>Basement</span></ViewTab>
      <Spring $n={1} /><Caret $w={9} />
    </ViewTabs>
    <Stage>
      <Canvas><Model /></Canvas>
      <VScroll $w={8}><ChevronUp size={6} strokeWidth={3} /><Spring $n={177} /><Knob $size={7} /><Spring $n={177} /><ChevronDown size={6} strokeWidth={3} /></VScroll>
    </Stage>
    <ViewBar>
      <span>1 : 100</span>
      <Mail size={7} color="#333" /><Box size={7} color="#1d77bd" /><Circle size={7} color="#d38a1a" fill="#f3cf55" /><RotateCw size={7} color="#b34040" /><Undo2 size={7} color="#5588aa" />
      <Crop size={7} color="#b33333" /><Crop size={7} color="#3a77b0" /><Lightbulb size={7} color="#555" /><Glasses size={7} color="#555" /><Lightbulb size={7} color="#2a8bd0" />
      <Square size={7} color="#555" /><FileBox size={7} color="#a34c4c" /><Box size={7} color="#555" /><Ruler size={7} color="#555" /><ChevronLeft size={6} strokeWidth={3} />
      <HScroll><Spring $n={193} /><HKnob /><Spring $n={207} /><ChevronDown size={6} /></HScroll>
    </ViewBar>
  </View>
);

/* ---------- status bar ---------- */
const Status = styled.footer`height: 10px; display: grid; grid-template-columns: 428px 322px 1fr; align-items: center; background: #c9c9c9; & > div { display: flex; align-items: center; gap: 5px; height: 8px; }`;
const StatusField = styled.select`appearance: none; background: #fff; height: 8px; width: 104px; color: #333;`;
const ModelField = styled(StatusField)`width: 121px; color: #999; background: #ececec; padding-left: 2px;`;
const Icons = styled.div`padding-left: 25px;`;
const Split = styled.div`justify-content: space-between;`;

/* ---------- taskbar ---------- */
const Taskbar = styled.div`height: 18px; flex: none; display: flex; align-items: center; background: #1c1c1c; color: #eee;`;
const TaskButton = styled.button<{ $open?: boolean; $on?: boolean }>`
  width: 23px; height: 18px; display: grid; place-items: center; background: ${(p) => (p.$on ? "#545454" : "none")};
  ${(p) => p.$open && css`box-shadow: inset 0 -1px #79b8e8;`}
`;
const SearchBox = styled.label`width: 160px; height: 18px; display: flex; align-items: center; gap: 5px; padding: 0 6px; background: #f1f1f1; color: #333;`;
const SearchInput = styled.input`border: 0; background: none; font-size: 7px; width: 100%; padding: 0; outline: 0; &::placeholder { color: #444; }`;
const Tile = styled.span<{ $bg: string; $c: string }>`width: 11px; height: 11px; display: grid; place-items: center; border-radius: 1px; background: ${(p) => p.$bg}; color: ${(p) => p.$c}; font-weight: 700; font-size: 6px; line-height: 11px;`;
const BigTile = styled(Tile)`font-size: 9px;`;
const Tray = styled.div`margin-left: auto; display: flex; align-items: center; gap: 4px; padding-right: 15px; color: #eee; white-space: nowrap; text-align: center;`;

const TaskApps = () => (
  <>
    <TaskButton aria-label="Cortana"><Circle size={9} color="#fff" strokeWidth={3} /></TaskButton>
    <TaskButton aria-label="Task view"><svg width="9" height="9" viewBox="0 0 9 9" fill="none" stroke="#eee"><path d="M.500 3.500h5v3h-5zM.500 0v1.500h5V0M.500 9V8h5v1M8 0v9M7 4h2" /></svg></TaskButton>
    <TaskButton aria-label="Outlook"><svg width="12" height="10" viewBox="0 0 12 10"><path d="M4 0h7v9H4z" fill="#28a8ea" /><path d="M6 4h6v5H6z" fill="#0f6cbd" /><path d="M0 2h7v7H0z" fill="#0a5ba5" /><circle cx="3.500" cy="5.500" r="1.700" fill="none" stroke="#fff" /><path d="M7 4l2.500 2L12 4" fill="none" stroke="#fff" strokeWidth=".7" /></svg></TaskButton>
    <TaskButton aria-label="Sticky notes"><svg width="11" height="11" viewBox="0 0 11 11"><path d="M0 0h11v11H0z" fill="#fbd928" /><path d="M6 6h5l-4 5H6z" fill="#4c4213" /></svg></TaskButton>
    <TaskButton aria-label="Explorer"><svg width="11" height="10" viewBox="0 0 11 10"><path d="M0 0h5l1 2h5v8H0z" fill="#f4c84f" /><path d="M2 5h7v5H7V7H4v3H2z" fill="#3c94d8" /></svg></TaskButton>
    <TaskButton><Tile $bg="#06233f" $c="#3fa6f5">Ps</Tile></TaskButton>
    <TaskButton><Tile $bg="#14096b" $c="#b7a3ff">Pr</Tile></TaskButton>
    <TaskButton $open aria-label="Chrome"><svg width="12" height="12" viewBox="0 0 12 12"><circle cx="6" cy="6" r="6" fill="#fbc116" /><path d="M6 6L.800 3A6 6 0 0 1 11.200 3z" fill="#e33b2e" /><path d="M6 6L.800 3A6 6 0 0 0 6 12z" fill="#2da44e" /><circle cx="6" cy="6" r="2.800" fill="#fff" /><circle cx="6" cy="6" r="2.100" fill="#3f83f0" /></svg></TaskButton>
    <TaskButton $open aria-label="Security"><svg width="11" height="12" viewBox="0 0 11 12"><path d="M.500 1.500Q3 1.500 5.500 .500Q8 1.500 10.500 1.500V6Q10 10 5.500 11.500Q1 10 .500 6z" fill="#2d7cc4" stroke="#c5dff3" /><rect x="3.500" y="3.500" width="4" height="4" rx="1" fill="none" stroke="#fff" /></svg></TaskButton>
    <TaskButton $open aria-label="Twinmotion"><svg width="12" height="10" viewBox="0 0 12 10"><path d="M0 1h12v4H9V4H7v6H5V4H0z" fill="#f5f5f5" /></svg></TaskButton>
    <TaskButton $open $on><BigTile $bg="#e3f0f8" $c="#1b5c99">R</BigTile></TaskButton>
    <TaskButton $open><BigTile $bg="#e3f0f8" $c="#1b5c99">R</BigTile></TaskButton>
  </>
);

const tabs = ["Structure", "Steel", "Precast", "Systems", "Insert", "Annotate", "Analyze", "Massing & Site", "Collaborate", "View", "Manage", "Add-Ins", "BIMcollab", "Datasmith", "Modify"];

export default function App() {
  return (
    <Screen>
      <Global />
      <Desk>
        <Revit>
          <TitleBar>
            <ToolStrip>
              <Tool><Logo>R</Logo></Tool>
              <Tool aria-label="Home"><LayoutPanelLeft size={7} /></Tool>
              <Tool aria-label="Open"><FolderOpen size={8} /></Tool>
              <Tool aria-label="Save"><Save size={8} /></Tool>
              <Tool aria-label="Sync"><RotateCw size={8} color="#777" /></Tool><Caret />
              <Tool aria-label="Undo"><Undo2 size={8} /></Tool><Caret />
              <Tool aria-label="Redo"><Redo2 size={8} color="#999" /></Tool><Caret />
              <Tool aria-label="Print"><Printer size={8} /></Tool>
              <Tool aria-label="Measure"><Ruler size={8} /></Tool><Caret />
              <Tool aria-label="Dimension"><Slash size={8} /></Tool>
              <Tool aria-label="Tag"><Tag size={8} /></Tool>
              <Tool><Letter>A</Letter></Tool>
              <Tool aria-label="3D view"><Box size={8} /></Tool><Caret />
              <Tool aria-label="Section"><Diamond size={6} /></Tool>
              <Tool $on aria-label="Thin lines"><ListTree size={8} /></Tool>
              <Tool aria-label="Close hidden"><Copy size={7} color="#b04444" /></Tool>
              <Tool aria-label="Switch windows"><Copy size={8} /></Tool><Caret /><Caret $w={9} />
            </ToolStrip>
            <Title>{"Autodesk Revit 2021.1.2 - Project1 - 3D View: {3D}"}</Title>
            <Account>
              <ChevronLeft size={5} strokeWidth={4} /><Binoculars size={8} /><Gap $w={1} /><User size={8} fill="#3a62b5" color="#2c4d94" /><span>barkin.makara</span>
              <Caret /><Tool aria-label="Store"><ShoppingCart size={7} color="#335" /></Tool><Gap $w={1} /><Tool aria-label="Help"><CircleHelp size={8} color="#2c5da8" /></Tool><Caret />
              <Gap $w={18} />
              <Tool aria-label="Minimize"><Minus size={6} strokeWidth={4} /></Tool><Tool aria-label="Restore"><Copy size={6} strokeWidth={3} /></Tool><Tool aria-label="Close"><X size={8} strokeWidth={3} /></Tool>
            </Account>
          </TitleBar>
          <Tabs>
            <Tab $kind="file">File</Tab><Tab $kind="active">Architecture</Tab>
            {tabs.map((t) => <Tab key={t}>{t}</Tab>)}
            <TabWidget><Caret /></TabWidget>
          </Tabs>
          <Ribbon />
          <OptionsBar />
          <Work>
            <Properties />
            <ModelView />
            <ProjectBrowser />
          </Work>
          <Status>
            <Split><span>Section Boxes : Section Box</span><Recycle size={8} color="#3d8f8c" /></Split>
            <div>
              <StatusField aria-label="Workset"><option> </option></StatusField>
              <span>:0</span><Table2 size={7} color="#666" /><FileBox size={7} color="#666" />
              <ModelField aria-label="Design option"><option>Main Model</option></ModelField>
            </div>
            <Icons>
              <Link2 size={8} color="#b5752c" /><Ruler size={8} color="#3a77b0" /><Square size={8} color="#c65f2a" /><FileBox size={8} color="#3a77b0" /><Slash size={8} color="#444" /><Circle size={7} color="#888" /><Filter size={8} color="#555" /><span>:0</span>
            </Icons>
          </Status>
        </Revit>
        <Edge><i /><i /><i /><i /></Edge>
      </Desk>
      <Taskbar>
        <TaskButton aria-label="Start"><svg width="9" height="9" viewBox="0 0 9 9"><path d="M0 1l4-.6V4H0zM4.600 .300L9 0v4H4.600zM0 4.600h4v3.800L0 8zM4.600 4.600H9V9l-4.400-.6z" fill="#fff" /></svg></TaskButton>
        <SearchBox><Search size={8} /><SearchInput aria-label="Search" placeholder="Type here to search" /></SearchBox>
        <TaskApps />
        <Tray>
          <svg width="9" height="9" viewBox="0 0 9 9"><circle cx="4.500" cy="4.500" r="4" fill="#f28a1c" /><circle cx="5" cy="4" r="2.500" fill="#fbb130" /></svg>
          <span>85°F&nbsp; Sunny</span><Gap $w={2} />
          <ChevronUp size={8} /><BatteryMedium size={8} /><Wifi size={8} />
          <div>ENG<br />TRQ</div>
          <div>10:41 PM<br />8/29/2022</div>
          <Gap $w={2} /><MessageSquareText size={9} fill="#fff" color="#888" />
        </Tray>
      </Taskbar>
    </Screen>
  );
}
